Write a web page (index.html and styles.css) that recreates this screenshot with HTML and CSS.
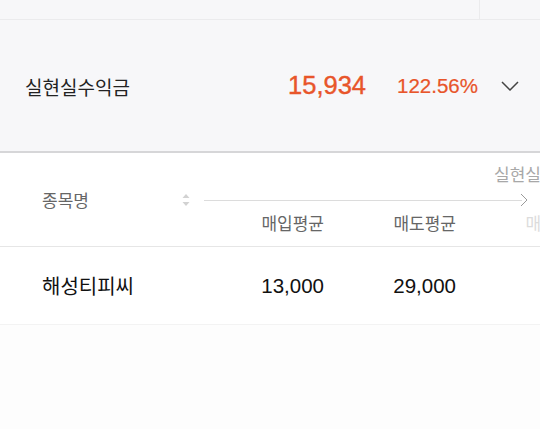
FILE: index.html
```html
<!DOCTYPE html>
<html lang="ko">
<head>
<meta charset="utf-8">
<link rel="stylesheet" href="styles.css">
</head>
<body>
<div class="topbar">
  <div class="topbar-main"></div>
  <div class="topbar-side"></div>
</div>
<div class="summary">
  <span class="summary-label">실현실수익금</span>
  <span class="summary-value">15,934</span>
  <span class="summary-rate">122.56%</span>
  <svg class="summary-toggle" width="18" height="10" viewBox="0 0 18 10"><path d="M1 1 L9 9 L17 1" fill="none" stroke="#444" stroke-width="1.5"/></svg>
</div>
<div class="thead">
  <div class="th-name">
    <span>종목명</span>
    <svg class="sort" width="8" height="14" viewBox="0 0 8 14"><path d="M4 1 L7.5 5 L0.5 5 Z" fill="#d2d2d2"/><path d="M4 13 L7.5 9 L0.5 9 Z" fill="#d2d2d2"/></svg>
  </div>
  <div class="th-scroll">
    <div class="th-group">실현실수익</div>
    <div class="th-line">
      <div class="line"></div>
      <svg class="more" width="8" height="14" viewBox="0 0 8 14"><path d="M1 1 L7 7 L1 13" fill="none" stroke="#9a9a9a" stroke-width="1"/></svg>
    </div>
    <div class="th-cols">
      <span class="col c1">매입평균</span>
      <span class="col c2">매도평균</span>
      <span class="col c3 faded">매도금액</span>
    </div>
  </div>
</div>
<div class="trow">
  <span class="td-name">해성티피씨</span>
  <span class="td-num">13,000</span>
  <span class="td-num">29,000</span>
</div>
<div class="rest"></div>
</body>
</html>
```

FILE: styles.css
```css
* { box-sizing: border-box; }
html, body { margin: 0; padding: 0; }
body {
  width: 540px;
  height: 429px;
  overflow: hidden;
  background: #fdfdfd;
  font-family: "Liberation Sans", "Noto Sans CJK KR", sans-serif;
}
.topbar {
  height: 20px;
  display: flex;
  background: #f7f7f9;
  border-bottom: 1px solid #ebebed;
}
.topbar-main { width: 480px; border-right: 1px solid #ebebed; }
.topbar-side { flex: 1; }
.summary {
  height: 133px;
  display: flex;
  align-items: center;
  padding: 0 21px 0 25px;
  background: #f7f7f9;
  border-bottom: 2px solid #d6d6d8;
}
.summary-label {
  flex: 1;
  font-size: 19px;
  color: #222;
  margin-top: 1px;
}
.summary-value {
  font-size: 25.5px;
  color: #e8552a;
  -webkit-text-stroke: 0.4px #e8552a;
}
.summary-rate {
  margin-left: 31px;
  font-size: 20.5px;
  color: #e8552a;
  -webkit-text-stroke: 0.2px #e8552a;
}
.summary-toggle { margin-left: 23px; }
.thead {
  height: 94px;
  display: flex;
  background: #fff;
  border-bottom: 1px solid #e6e6e6;
}
.th-name {
  width: 204px;
  display: flex;
  align-items: center;
  padding: 0 14px 0 42px;
  font-size: 17px;
  color: #666;
}
.th-name span { flex: 1; }
.th-scroll {
  flex: 1;
  overflow: hidden;
  padding-top: 12px;
  display: flex;
  flex-direction: column;
}
.th-group {
  height: 22px;
  line-height: 22px;
  padding-left: 290px;
  font-size: 17px;
  color: #a8a8a8;
  white-space: nowrap;
}
.th-line {
  height: 26px;
  display: flex;
  align-items: center;
}
.line { flex: 1; height: 1px; background: #dcdcdc; }
.more { margin: 0 12px 0 -2px; }
.th-cols {
  height: 24px;
  line-height: 24px;
  display: flex;
  white-space: nowrap;
  font-size: 17px;
  color: #666;
}
.col { flex: none; text-align: right; }
.c1 { width: 120px; }
.c2 { width: 132px; }
.c3 { width: 132px; }
.faded { color: #dcdcdc; }
.trow {
  height: 78px;
  display: flex;
  align-items: center;
  background: #fff;
  border-bottom: 1px solid #f3f3f3;
}
.td-name {
  width: 192px;
  padding-left: 42px;
  font-size: 20px;
  color: #111;
}
.td-num {
  width: 132px;
  text-align: right;
  font-size: 20.5px;
  color: #111;
}
.rest { flex: 1; }
```
